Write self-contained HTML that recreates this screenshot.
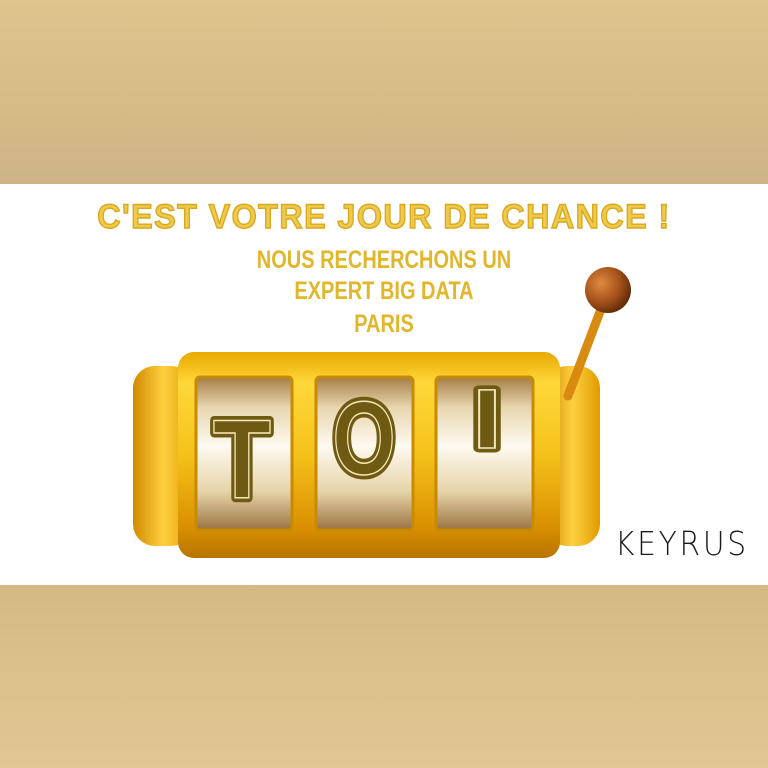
<!DOCTYPE html>
<html><head><meta charset="utf-8"><style>
html,body{margin:0;padding:0;width:768px;height:768px;overflow:hidden;background:#fff}
.band{position:absolute;left:0;width:768px;height:184px}
.top{top:0;background:linear-gradient(180deg,#dfc48c 0%,#d6bb86 60%,#cdb488 100%)}
.bot{top:585px;height:183px;background:linear-gradient(180deg,#d5b985 0%,#dcc18b 50%,#e0c793 100%)}
.t{position:absolute;left:0;width:768px;text-align:center;font-family:"Liberation Sans",sans-serif;font-weight:bold;color:#e3b72a}
.title{top:198px;font-size:34px;letter-spacing:1.5px;color:#eec94e;-webkit-text-stroke:1.4px #d9a91c;transform:scaleX(.95)}
.sub{font-size:25px;transform:scaleX(.8);color:#e2b62a}
.k{position:absolute;left:615px;top:524px;font-family:"DejaVu Sans","Liberation Sans",sans-serif;font-size:33px;letter-spacing:3px;color:#1a1a1a;font-weight:200;transform:scaleX(.9);transform-origin:left}
</style></head><body>
<div class="band top"></div>
<div class="band bot"></div>
<div class="t title">C'EST VOTRE JOUR DE CHANCE !</div>
<div class="t sub" style="top:246px">NOUS RECHERCHONS UN</div>
<div class="t sub" style="top:277px">EXPERT BIG DATA</div>
<div class="t sub" style="top:310px">PARIS</div>
<svg style="position:absolute;left:0;top:0" width="768" height="768">
<defs>
<linearGradient id="g" x1="0" y1="0" x2="0" y2="1">
<stop offset="0" stop-color="#e9a800"/><stop offset=".15" stop-color="#ffd83a"/><stop offset=".5" stop-color="#f5c21a"/><stop offset=".85" stop-color="#d99000"/><stop offset="1" stop-color="#b87400"/></linearGradient>
<linearGradient id="gs" x1="0" y1="0" x2="1" y2="0">
<stop offset="0" stop-color="#d08a00"/><stop offset=".5" stop-color="#ffd040"/><stop offset="1" stop-color="#e09c00"/></linearGradient>
<linearGradient id="w" x1="0" y1="0" x2="0" y2="1">
<stop offset="0" stop-color="#a57d45"/><stop offset=".2" stop-color="#e8d6b0"/><stop offset=".45" stop-color="#fffaf0"/><stop offset=".75" stop-color="#e6d3a8"/><stop offset="1" stop-color="#9a7340"/></linearGradient>
<radialGradient id="b" cx=".35" cy=".35" r=".7"><stop offset="0" stop-color="#e08a40"/><stop offset=".6" stop-color="#a3501a"/><stop offset="1" stop-color="#5e2a08"/></radialGradient>
</defs>
<rect x="133" y="366" width="60" height="180" rx="22" fill="url(#gs)"/>
<rect x="545" y="366" width="55" height="180" rx="22" fill="url(#gs)"/>
<line x1="568" y1="396" x2="606" y2="296" stroke="#d98a10" stroke-width="9" stroke-linecap="round"/>
<circle cx="608" cy="290" r="23" fill="url(#b)"/>
<rect x="178" y="352" width="382" height="206" rx="16" fill="url(#g)"/>
<rect x="196" y="377" width="96" height="153" rx="4" fill="url(#w)" stroke="#c88a00" stroke-width="3"/>
<rect x="316" y="377" width="97" height="153" rx="4" fill="url(#w)" stroke="#c88a00" stroke-width="3"/>
<rect x="436" y="377" width="97" height="153" rx="4" fill="url(#w)" stroke="#c88a00" stroke-width="3"/>
<g font-family="Liberation Sans,sans-serif" font-weight="bold" text-anchor="middle">
<g fill="#6f5a14" stroke="#6f5a14" stroke-width="9" stroke-linejoin="round">
<text x="242" y="498" font-size="112" transform="translate(242 0) scale(.85 1) translate(-242 0)">T</text>
<text x="364" y="474" font-size="104" transform="translate(364 0) scale(.78 1) translate(-364 0)">O</text>
<text x="487" y="448" font-size="84" transform="translate(487 0) scale(1.3 1) translate(-487 0)">I</text>
</g>
<g fill="#6f5a14" stroke="#f5e8b8" stroke-width="1.5">
<text x="242" y="498" font-size="112" transform="translate(242 0) scale(.85 1) translate(-242 0)">T</text>
<text x="364" y="474" font-size="104" transform="translate(364 0) scale(.78 1) translate(-364 0)">O</text>
<text x="487" y="448" font-size="84" transform="translate(487 0) scale(1.3 1) translate(-487 0)">I</text>
</g>
</g>
</svg>
<div class="k">KEYRUS</div>
</body></html>
